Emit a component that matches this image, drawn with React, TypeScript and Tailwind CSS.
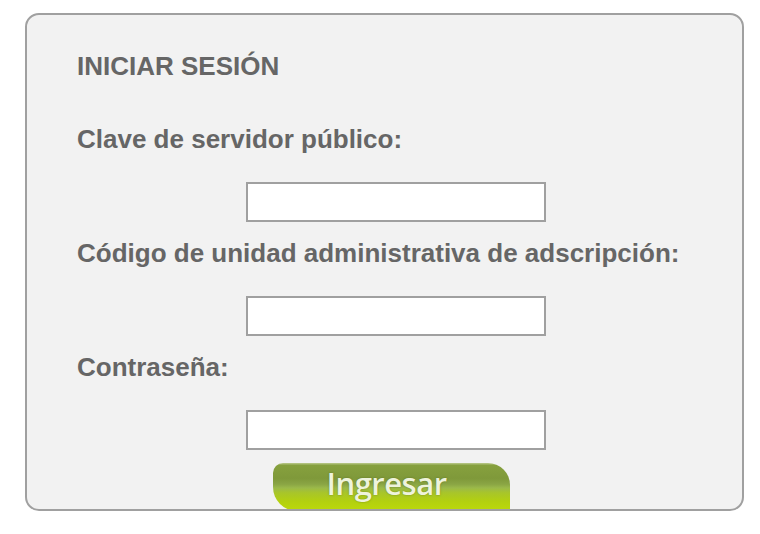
export default function App() {
  return (
    <div className="h-[534px] w-[760px] bg-white pt-[13px] pl-[25px]" style={{ fontFamily: '"Liberation Sans", Arial, sans-serif' }}>
      <div className="h-[498px] w-[719px] overflow-hidden rounded-[14px] border-2 border-[#a0a0a0] bg-[#f2f2f2] pl-[50px] pt-[36px]">
        <h2 className="text-[26px] leading-[30px] font-bold text-[#666666]">INICIAR SESIÓN</h2>

        <Field label="Clave de servidor público:" top="mt-[43px]" />
        <Field label="Código de unidad administrativa de adscripción:" top="mt-[16px]" />
        <Field label="Contraseña:" top="mt-[16px]" />

        <button
          type="button"
          className="mt-[13px] ml-[196px] flex h-[48px] w-[237px] items-start justify-center rounded-tl-[10px] rounded-tr-[22px] rounded-bl-[24px] pr-[10px] pt-[1px] text-[31px] leading-[38px] font-semibold tracking-[-0.5px] text-[#eef3dc]"
          style={{
            fontFamily: '"Open Sans", "Noto Sans", sans-serif',
            background:
              "linear-gradient(180deg, #bccb8e 0%, #86a03e 5%, #7f993a 32%, #8aa544 44%, #9bb94a 52%, #a8c52a 62%, #b3d00f 80%, #bcd90a 100%)",
            textShadow: "0 0 2px rgba(70,90,20,0.6)",
          }}
        >
          Ingresar
        </button>
      </div>
    </div>
  )
}

function Field({ label, top }: { label: string; top: string }) {
  return (
    <div className={top}>
      <label className="block text-[26px] leading-[30px] font-bold text-[#666666]">{label}</label>
      <input
        type="text"
        className="mt-[28px] ml-[169px] block h-[40px] w-[300px] border-2 border-[#a0a0a0] bg-white outline-none"
      />
    </div>
  )
}
